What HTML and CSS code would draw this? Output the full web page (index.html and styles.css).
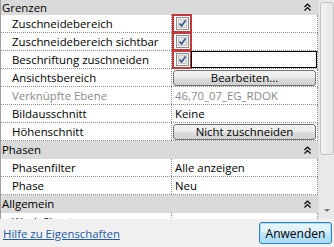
FILE: index.html
```html
<!DOCTYPE html>
<html lang="de">
<head>
    <meta charset="UTF-8">
    <meta name="viewport" content="width=device-width, initial-scale=1.0">
    <title>Eigenschaften</title>
    <link rel="stylesheet" href="styles.css">
</head>
<body>
    <div class="panel">
        <div class="grid-area">
            <div class="props">
                <div class="group group-top">
                    <span>Grenzen</span>
                    <svg class="collapse" width="7" height="8" viewBox="0 0 7 8"><path d="M0.5 4 L3.5 1 L6.5 4 M0.5 7.5 L3.5 4.5 L6.5 7.5" fill="none" stroke="#000" stroke-width="1.2"/></svg>
                </div>
                <div class="row">
                    <div class="label">Zuschneidebereich</div>
                    <div class="value check-cell"><span class="mark"><svg width="13" height="13" viewBox="0 0 13 13"><rect x="0.5" y="0.5" width="12" height="12" fill="#f4f4f4" stroke="#8f8f8f"/><rect x="2.5" y="2.5" width="8" height="8" fill="#e4e4e4" stroke="#c8c8c8"/><path d="M3.6 6.4 L5.6 9 L9.6 3.4" fill="none" stroke="#35508c" stroke-width="1.6"/></svg></span></div>
                </div>
                <div class="row">
                    <div class="label">Zuschneidebereich sichtbar</div>
                    <div class="value check-cell"><span class="mark"><svg width="13" height="13" viewBox="0 0 13 13"><rect x="0.5" y="0.5" width="12" height="12" fill="#f4f4f4" stroke="#8f8f8f"/><rect x="2.5" y="2.5" width="8" height="8" fill="#e4e4e4" stroke="#c8c8c8"/><path d="M3.6 6.4 L5.6 9 L9.6 3.4" fill="none" stroke="#35508c" stroke-width="1.6"/></svg></span></div>
                </div>
                <div class="row">
                    <div class="label">Beschriftung zuschneiden</div>
                    <div class="value check-cell"><span class="mark"><svg width="13" height="13" viewBox="0 0 13 13"><rect x="0.5" y="0.5" width="12" height="12" fill="#f4f4f4" stroke="#8f8f8f"/><rect x="2.5" y="2.5" width="8" height="8" fill="#e4e4e4" stroke="#c8c8c8"/><path d="M3.6 6.4 L5.6 9 L9.6 3.4" fill="none" stroke="#35508c" stroke-width="1.6"/></svg></span><span class="focus-box"></span></div>
                </div>
                <div class="row">
                    <div class="label">Ansichtsbereich</div>
                    <div class="value button-cell"><button class="cell-button">Bearbeiten...</button></div>
                </div>
                <div class="row disabled">
                    <div class="label">Verknüpfte Ebene</div>
                    <div class="value">46,70_07_EG_RDOK</div>
                </div>
                <div class="row">
                    <div class="label">Bildausschnitt</div>
                    <div class="value">Keine</div>
                </div>
                <div class="row">
                    <div class="label">Höhenschnitt</div>
                    <div class="value button-cell"><button class="cell-button">Nicht zuschneiden</button></div>
                </div>
                <div class="group">
                    <span>Phasen</span>
                    <svg class="collapse" width="7" height="8" viewBox="0 0 7 8"><path d="M0.5 4 L3.5 1 L6.5 4 M0.5 7.5 L3.5 4.5 L6.5 7.5" fill="none" stroke="#000" stroke-width="1.2"/></svg>
                </div>
                <div class="row">
                    <div class="label">Phasenfilter</div>
                    <div class="value">Alle anzeigen</div>
                </div>
                <div class="row">
                    <div class="label">Phase</div>
                    <div class="value">Neu</div>
                </div>
                <div class="group">
                    <span>Allgemein</span>
                    <svg class="collapse" width="7" height="8" viewBox="0 0 7 8"><path d="M0.5 4 L3.5 1 L6.5 4 M0.5 7.5 L3.5 4.5 L6.5 7.5" fill="none" stroke="#000" stroke-width="1.2"/></svg>
                </div>
                <div class="row">
                    <div class="label">Work Sheets</div>
                    <div class="value"></div>
                </div>
            </div>
            <div class="scrollbar">
                <div class="thumb"></div>
                <div class="arrow-down"></div>
            </div>
        </div>
        <div class="footer">
            <a href="#" class="help-link">Hilfe zu Eigenschaften</a>
            <button class="apply">Anwenden</button>
        </div>
    </div>
</body>
</html>
```

FILE: styles.css
```css
body {
    margin: 0;
    padding: 0;
    font-family: 'Open Sans', 'Noto Sans', sans-serif;
    font-size: 11.4px;
    color: #000;
    background-color: #f0f0f0;
}
.panel {
    width: 334px;
    height: 247px;
    display: flex;
    flex-direction: column;
    overflow: hidden;
}
.grid-area {
    height: 219px;
    display: flex;
    background-color: #fff;
}
.props {
    width: 318px;
    overflow: hidden;
    border-left: 1px solid #a0a0a0;
    box-sizing: border-box;
}
.group {
    height: 18px;
    background-color: #dadada;
    display: flex;
    align-items: center;
    justify-content: space-between;
    padding: 0 7px 0 2px;
    margin-left: -1px;
}
.group-top {
    height: 15px;
    align-items: flex-start;
}
.group span {
    line-height: 16px;
}
.group-top .collapse {
    margin-top: 3px;
}
.collapse {
    display: block;
}
.row {
    height: 18px;
    display: flex;
    box-sizing: border-box;
    border-bottom: 1px dotted #8c8c8c;
    border-right: 1px dotted #8c8c8c;
    line-height: 17px;
}
.label {
    width: 159px;
    padding-left: 11px;
    border-right: 1px dotted #8c8c8c;
    white-space: nowrap;
    overflow: hidden;
}
.value {
    flex-grow: 1;
    padding-left: 3px;
    position: relative;
    white-space: nowrap;
}
.disabled {
    color: #8a8a8a;
}
.check-cell {
    padding-left: 0;
}
.mark {
    display: flex;
    align-items: center;
    justify-content: center;
    width: 20px;
    height: 19px;
    margin-top: -1px;
    box-sizing: border-box;
    border: 2px solid #c2383b;
}
.mark svg {
    display: block;
}
.focus-box {
    position: absolute;
    left: 19px;
    right: 0;
    top: 0;
    bottom: 0;
    border: 1px solid #000;
}
.button-cell {
    padding: 1px 1px 0 1px;
}
.cell-button {
    width: 100%;
    height: 16px;
    display: block;
    padding: 0;
    font-family: inherit;
    font-size: 11.4px;
    line-height: 14px;
    color: #000;
    border: 1px solid #707070;
    border-radius: 3px;
    background: linear-gradient(#f3f3f3 0%, #ebebeb 48%, #dddddd 52%, #cfcfcf 100%);
}
.scrollbar {
    width: 16px;
    background-color: #e9e9e9;
    border-left: 1px solid #e0e0e0;
    box-sizing: border-box;
    display: flex;
    flex-direction: column;
    align-items: center;
}
.thumb {
    width: 14px;
    height: 153px;
    margin-top: 2px;
    box-sizing: border-box;
    border: 1px solid #c4c4c4;
    border-radius: 3px;
    background: linear-gradient(to right, #f4f4f4, #e4e4e4);
}
.arrow-down {
    margin-top: auto;
    margin-bottom: 7px;
    width: 0;
    height: 0;
    border-left: 3px solid transparent;
    border-right: 3px solid transparent;
    border-top: 3px solid #7a7a7a;
}
.footer {
    flex-grow: 1;
    display: flex;
    align-items: center;
    justify-content: space-between;
    padding: 0 2px 0 3px;
    background-color: #f0f0f0;
}
.help-link {
    color: #1c5ba8;
    text-decoration: underline;
}
.apply {
    width: 73px;
    height: 22px;
    padding: 0;
    font-family: inherit;
    font-size: 12px;
    color: #000;
    border: 1px solid #3c7fb1;
    border-radius: 3px;
    background: linear-gradient(#eaf6fd 0%, #d9f0fc 48%, #bee6fd 52%, #a7d9f5 100%);
    box-shadow: inset 0 0 0 1px #9ce3fb;
}
```
